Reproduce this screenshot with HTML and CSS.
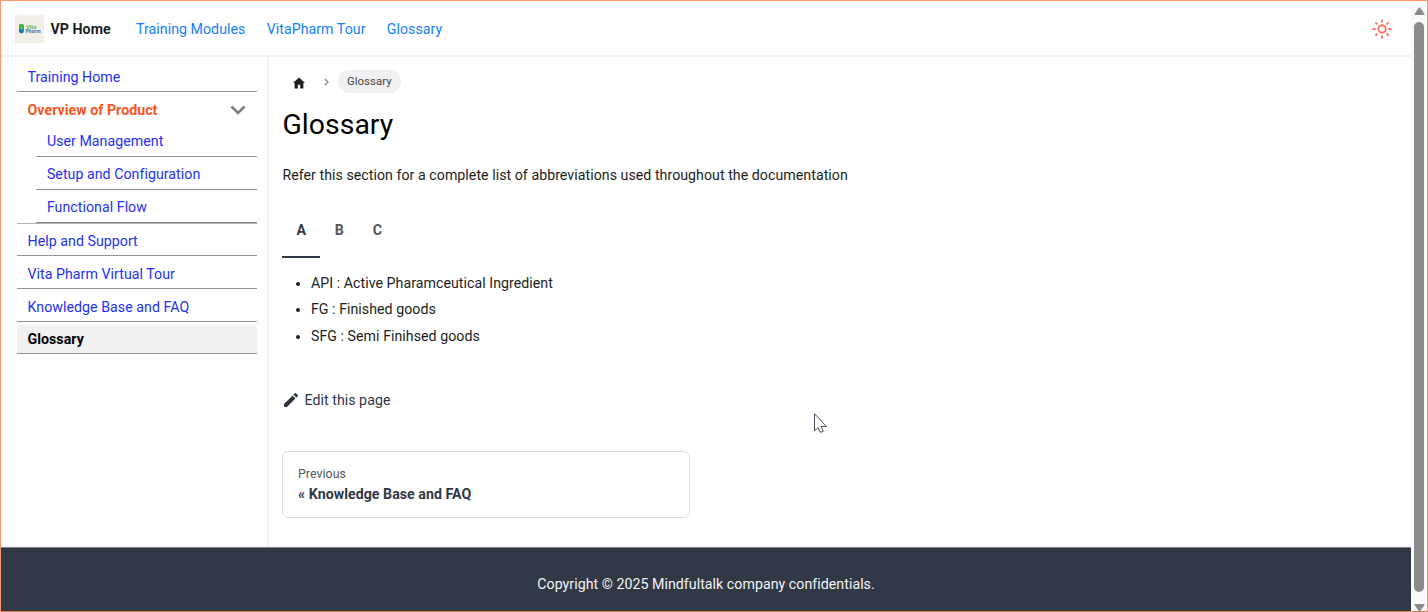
FILE: index.html
```html
<!DOCTYPE html>
<html lang="en">
<head>
<meta charset="utf-8">
<title>Glossary | VP Home</title>
<link rel="stylesheet" href="styles.css">
</head>
<body>
<div class="window">
  <div class="page">
    <header class="navbar">
      <svg class="logo" viewBox="0 0 29 28">
        <rect width="29" height="28" fill="#f2efe9"/>
        <rect x="4" y="9" width="4.800" height="9.500" rx="2.400" fill="#1673a5"/>
        <path d="M4 14v-2.500a2.400 2.400 0 0 1 4.800 0V14z" fill="#49ae4b"/>
        <path d="M6.500 12v3.500" stroke="#a7d0cc" stroke-width=".7"/>
        <text class="logo-top" x="11" y="13.500" textLength="10.500" lengthAdjust="spacingAndGlyphs">Vita</text>
        <text class="logo-bottom" x="10.500" y="18" textLength="15" lengthAdjust="spacingAndGlyphs">Pharm</text>
      </svg>
      <a class="brand">VP Home</a>
      <nav class="nav-links"><a>Training Modules</a><a>VitaPharm Tour</a><a>Glossary</a></nav>
      <svg class="sun" viewBox="0 0 20 20" fill="none" stroke="#fa7461" stroke-width="1.900">
        <circle cx="10" cy="10" r="3.700"/>
        <path d="M10 .5v3M10 16.500v3M.5 10h3.200M16.300 10h3.200M3.400 3.400l2 2M14.600 14.600l2 2M3.400 16.600l2-2M14.600 5.400l2-2"/>
      </svg>
    </header>
    <div class="main">
      <aside class="sidebar">
        <a class="item first">Training Home</a>
        <div class="group">
          <a class="item category">Overview of Product
            <svg class="chevron" viewBox="0 0 16 10"><path d="M1.500 1.500 8 8l6.500-6.500" fill="none" stroke="#7d7d7d" stroke-width="2.600"/></svg>
          </a>
          <div class="children">
            <a class="item">User Management</a>
            <a class="item">Setup and Configuration</a>
            <a class="item">Functional Flow</a>
          </div>
        </div>
        <a class="item">Help and Support</a>
        <a class="item">Vita Pharm Virtual Tour</a>
        <a class="item">Knowledge Base and FAQ</a>
        <a class="item active">Glossary</a>
      </aside>
      <main class="content">
        <div class="crumbs">
          <svg class="home" viewBox="0 0 12 12"><path d="M6 .4 0 6h1.600v5.400h3.200V7.800h2.400v3.600h3.200V6H12z" fill="#1c1e21"/></svg>
          <svg class="sep" viewBox="0 0 5 8"><path d="M.8 1 4 4 .8 7" fill="none" stroke="#808080" stroke-width="1.200"/></svg>
          <span class="pill">Glossary</span>
        </div>
        <h1>Glossary</h1>
        <p class="intro">Refer this section for a complete list of abbreviations used throughout the documentation</p>
        <div class="tabs"><span class="tab current">A</span><span class="tab">B</span><span class="tab">C</span></div>
        <ul class="terms">
          <li>API : Active Pharamceutical Ingredient</li>
          <li>FG : Finished goods</li>
          <li>SFG : Semi Finihsed goods</li>
        </ul>
        <a class="edit">
          <svg class="pencil" viewBox="3 3 18 18"><path d="M3 17.250V21h3.750L17.810 9.940l-3.750-3.750L3 17.250zM20.710 7.040a1 1 0 0 0 0-1.410l-2.340-2.340a1 1 0 0 0-1.410 0l-1.830 1.830 3.750 3.750z" fill="#303846"/></svg>
          <span>Edit this page</span>
        </a>
        <a class="previous"><span class="sub">Previous</span><span class="label">« Knowledge Base and FAQ</span></a>
      </main>
    </div>
    <footer class="footer"><span>Copyright © 2025 Mindfultalk company confidentials.</span></footer>
  </div>
  <div class="scrollbar">
    <svg class="arrow" viewBox="0 0 11 8"><path d="M4.800.7a1 1 0 0 1 1.400 0L10.500 7q.3 1-.8 1H1.300Q.2 8 .5 7z" fill="#8b8b8b"/></svg>
    <div class="thumb"></div>
    <svg class="arrow down" viewBox="0 0 11 8"><path d="M4.800.7a1 1 0 0 1 1.400 0L10.500 7q.3 1-.8 1H1.300Q.2 8 .5 7z" fill="#8b8b8b"/></svg>
  </div>
</div>
<svg class="cursor" viewBox="0 0 14 20"><path d="M.5.7v17.200l3.700-3.400 2.200 4.900 2.900-1.200-2.200-4.700h5.300z" fill="#fff" stroke="#383848" stroke-width=".9"/></svg>
</body>
</html>
```

FILE: styles.css
```css
* { box-sizing: border-box; }
body { margin: 0; font-family: Roboto, sans-serif; font-size: 14.200px; color: #1c1e21; letter-spacing: 0.035px; }
.window { height: 612px; border: 1px solid #fe946c; border-bottom-color: #d4825c; display: flex; overflow: hidden; background: #fff; }
.page { width: 1410px; display: flex; flex-direction: column; }
.navbar { height: 56px; border-bottom: 2px solid #f2f2f2; display: flex; align-items: center; padding: 1px 19px 0 14px; flex: none; }
.logo { width: 29px; height: 28px; }
.logo-top { font: bold 5px Roboto, sans-serif; fill: #69b553; }
.logo-bottom { font: bold 5px Roboto, sans-serif; fill: #287eaa; }
.brand { font-weight: 700; margin-left: 6.500px; width: 85.500px; }
.nav-links { display: flex; gap: 21.300px; color: #1580ff; flex: 1; padding-top: 1px; }
.sun { width: 20px; height: 20px; }
.main { display: flex; height: 490px; flex: none; }
.sidebar { width: 268px; border-right: 2px solid #f2f2f2; padding: 4px 10px 0 16px; flex: none; color: #2430fa; }
.item { display: flex; align-items: center; height: 29px; margin-bottom: 3.800px; padding-left: 10.500px; border-bottom: 1px solid #969093; border-radius: 3px 3px 0 0; }
.first { height: 31px; padding-top: 2px; margin-bottom: 3px; }
.category { color: #fa5421; font-weight: 700; justify-content: space-between; padding-right: 11px; border: 0; margin-bottom: 4px; }
.chevron { width: 16px; height: 10px; }
.children { margin-left: 19.400px; }
.children .item { padding-bottom: 1.500px; }
.children .item:last-child { margin-bottom: 0; border-color: #837c7f; }
.group { border-bottom: 1px solid #b5b2b4; margin-bottom: 3px; height: 129px; }
.active { background: #f1f1f1; color: #000; font-weight: 700; }
.content { padding: 12px 0 0 13.400px; width: 1100px; }
.crumbs { display: flex; align-items: center; height: 24px; padding-left: 10.600px; }
.home { width: 12px; height: 12px; margin-top: 4px; }
.sep { width: 5px; height: 8px; margin: 1px 9px 0 19px; }
.pill { background: #f1f1f1; border-radius: 12px; height: 23px; line-height: 23px; padding: 0 9px; font-size: 11.400px; color: #444; }
h1 { margin: 14px 0 0; font-size: 28.400px; font-weight: 400; line-height: 36px; letter-spacing: .05px; color: #000; }
.intro { margin: 22px 0 0; line-height: 20px; }
.tabs { display: flex; margin-top: 18px; font-weight: 700; color: #525860; }
.tab { width: 38px; height: 55px; line-height: 55px; text-align: center; }
.current { color: #303846; border-bottom: 2px solid #303846; }
.terms { margin: 12px 0 0; padding-left: 28.600px; line-height: 26.400px; }
.edit { display: flex; align-items: center; gap: 6.500px; margin-top: 41px; height: 20px; padding-left: 1.600px; color: #303846; }
.pencil { width: 14px; height: 14px; }
.previous { display: flex; flex-direction: column; width: 408px; height: 67px; margin-top: 41px; padding: 12px 14.600px; border: 1px solid #dadde1; border-radius: 6px; }
.sub { font-size: 12.400px; line-height: 20px; color: #525860; }
.label { font-weight: 700; line-height: 20px; color: #303846; }
.footer { height: 64px; border-top: 1px solid #7c8087; background: #303846; color: #f3f4f6; display: flex; justify-content: center; padding-top: 28px; flex: none; }
.scrollbar { width: 16px; height: 611px; background: #fafafa; display: flex; flex-direction: column; align-items: center; padding-top: 6px; }
.arrow { width: 11px; height: 8px; flex: none; }
.thumb { width: 10px; height: 570px; background: #8b8b8b; border-radius: 5px; margin: 7px 0 12px; flex: none; }
.down { transform: rotate(180deg); }
.cursor { position: absolute; left: 814px; top: 413px; width: 14px; height: 20px; }
```
